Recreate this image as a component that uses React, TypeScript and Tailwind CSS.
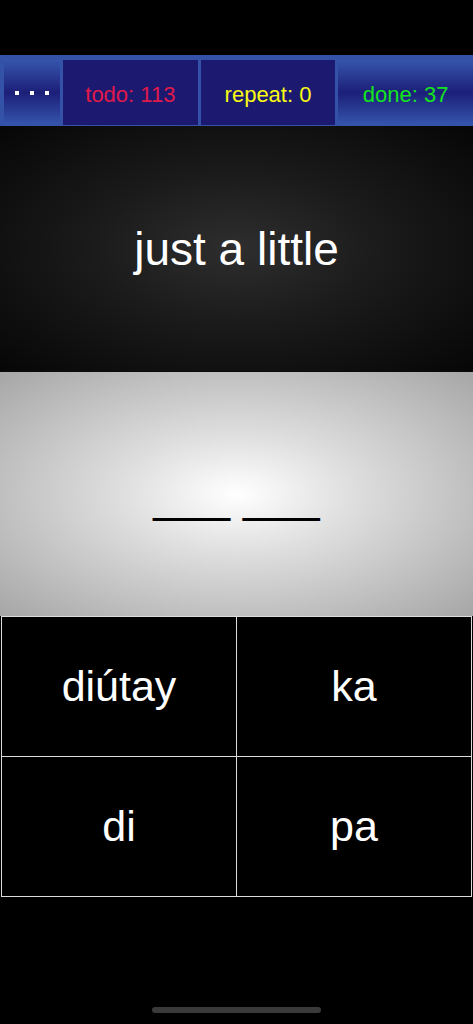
import React from 'react';

const counters = [
  { label: 'todo: 113', color: 'text-[#e0194a]', dark: true },
  { label: 'repeat: 0', color: 'text-[#fafa14]', dark: true },
  { label: 'done: 37', color: 'text-[#14e41e]', dark: false },
];

const choices = ['diútay', 'ka', 'di', 'pa'];

const App = () => {
  return (
    <div className="w-[473px] h-[1024px] bg-black flex flex-col font-['Liberation_Sans',Arial,sans-serif] overflow-hidden">
      <div className="h-[55px] shrink-0" />

      {/* stats bar */}
      <div className="h-[71px] shrink-0 flex gap-[3px] bg-[#3352a8] pl-[4px] pt-[5px] pb-[1px]">
        <button className="w-[56px] flex items-center justify-center gap-[11px] bg-[linear-gradient(to_bottom,#3555ad_0%,#1c1f78_50%,#3555ad_100%)]">
          <span className="w-[4px] h-[4px] bg-white" />
          <span className="w-[4px] h-[4px] bg-white" />
          <span className="w-[4px] h-[4px] bg-white" />
        </button>
        {counters.map((c) => (
          <div
            key={c.label}
            className={`flex-1 flex items-center justify-center pt-[3px] text-[22px] ${c.color} ${
              c.dark ? 'bg-[#1b1a70]' : 'bg-[linear-gradient(to_bottom,#3555ad_0%,#1c1f78_50%,#3555ad_100%)]'
            }`}
          >
            {c.label}
          </div>
        ))}
      </div>

      {/* prompt */}
      <div className="h-[246px] shrink-0 flex items-center justify-center border-b border-[#0a0a0a] bg-[radial-gradient(ellipse_at_center,#2e2e2e_0%,#1a1a1a_45%,#060606_100%)]">
        <span className="text-white text-[46px] leading-none">just a little</span>
      </div>

      {/* answer slots */}
      <div className="h-[244px] shrink-0 flex items-center justify-center pt-[4px] bg-[radial-gradient(ellipse_at_50%_50%,#ffffff_0%,#dedede_35%,#a6a6a6_100%)]">
        <span className="text-black text-[46px] leading-none">___ ___</span>
      </div>

      {/* choices */}
      <div className="mx-[1px] grid grid-cols-2 gap-[1px] p-[1px] bg-[#dcdcdc]">
        {choices.map((w) => (
          <button key={w} className="h-[139px] bg-black flex items-center justify-center text-white text-[43px]">
            {w}
          </button>
        ))}
      </div>

      <div className="flex-1 flex items-end justify-center pb-[11px]">
        <div className="w-[169px] h-[6px] rounded-full bg-[#3a3a3a]" />
      </div>
    </div>
  );
};

export default App;
